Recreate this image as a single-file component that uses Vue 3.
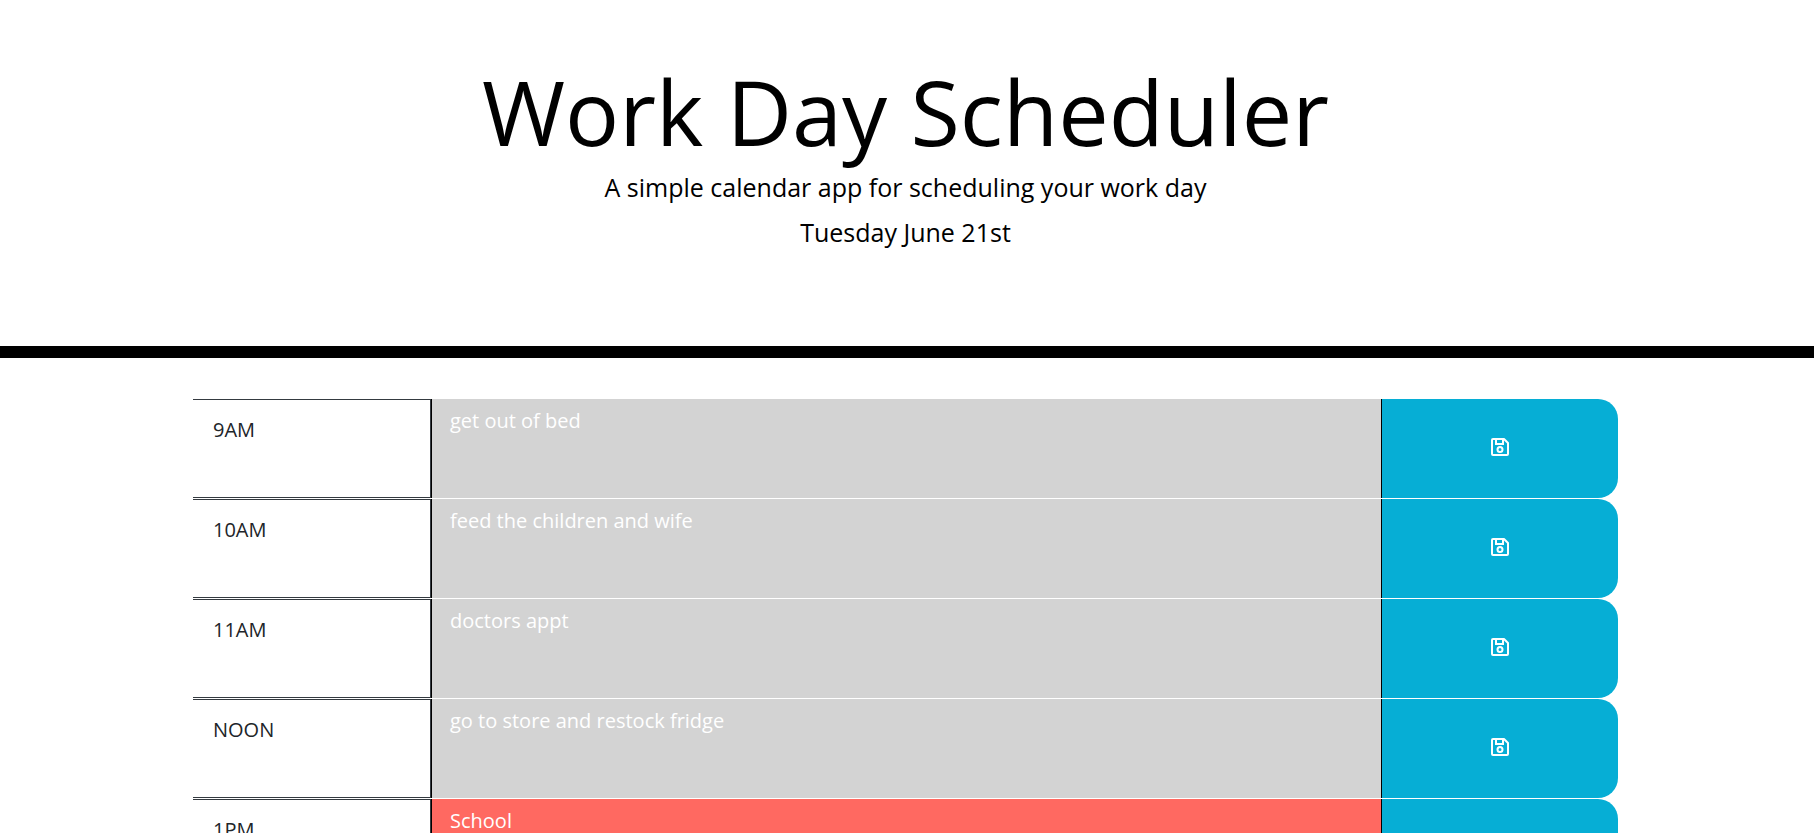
<script setup>
import { ref } from 'vue'

const blocks = ref([
  { hour: '9AM', task: 'get out of bed', state: 'past' },
  { hour: '10AM', task: 'feed the children and wife', state: 'past' },
  { hour: '11AM', task: 'doctors appt', state: 'past' },
  { hour: 'NOON', task: 'go to store and restock fridge', state: 'past' },
  { hour: '1PM', task: 'School', state: 'present' }
])
</script>

<template>
  <div class="page">
    <header class="banner">
      <h1 class="title">Work Day Scheduler</h1>
      <p class="lead">A simple calendar app for scheduling your work day</p>
      <p class="lead">Tuesday June 21st</p>
    </header>
    <main class="schedule">
      <form v-for="(block, i) in blocks" :key="block.hour" class="row" @submit.prevent>
        <label class="hour" :for="'task-' + i">{{ block.hour }}</label>
        <textarea :id="'task-' + i" v-model="block.task" class="task" :class="block.state" spellcheck="false"></textarea>
        <button class="save" type="submit" :aria-label="'Save ' + block.hour">
          <svg viewBox="0 0 24 24" width="24" height="24" fill="none" stroke="currentColor" stroke-width="2" aria-hidden="true">
            <path d="M5 4h11l4 4v11a1 1 0 0 1-1 1H5a1 1 0 0 1-1-1V5a1 1 0 0 1 1-1z" stroke-linejoin="round" />
            <path d="M8 4v5h7V4" />
            <circle cx="12" cy="14.5" r="2.5" />
          </svg>
        </button>
      </form>
    </main>
  </div>
</template>

<style>
html {
  background: #fff;
  overflow: hidden;
}
</style>

<style scoped>
.page {
  height: 100vh;
  overflow: hidden;
  font-family: "Open Sans", "Liberation Sans", sans-serif;
  color: #212529;
}
.banner {
  box-sizing: border-box;
  padding: 57px 27px 87px 24px;
  border-bottom: 12px solid #000;
  color: #000;
  text-align: center;
}
.title {
  margin: 0 0 4px;
  font-size: 90px;
  font-weight: 400;
  line-height: 108px;
}
.lead {
  margin: 0 0 8px;
  font-size: 25px;
  font-weight: 400;
  line-height: 37px;
}
.schedule {
  display: grid;
  gap: 1px;
  padding: 41px 196px 0 193px;
}
.row {
  display: grid;
  grid-template-columns: minmax(0, 238fr) minmax(0, 951fr) minmax(0, 236fr);
  height: 99px;
}
.hour {
  box-sizing: border-box;
  padding: 15px 20px;
  border: solid #343a40;
  border-width: 1px 1px 1px 0;
  font-size: 20px;
  line-height: 30px;
}
.task {
  box-sizing: border-box;
  width: 100%;
  height: 100%;
  margin: 0;
  padding: 7px 18px;
  border: solid #000;
  border-width: 0 1px;
  border-radius: 0;
  outline: none;
  resize: none;
  font: inherit;
  font-size: 20px;
  line-height: 30px;
  color: #fff;
}
.past {
  background: #d3d3d3;
}
.present {
  background: #ff6961;
}
.save {
  display: flex;
  align-items: center;
  justify-content: center;
  padding: 0 0 3px;
  border: 0;
  border-radius: 0 20px 20px 0;
  background: #06aed5;
  color: #fff;
}
</style>
